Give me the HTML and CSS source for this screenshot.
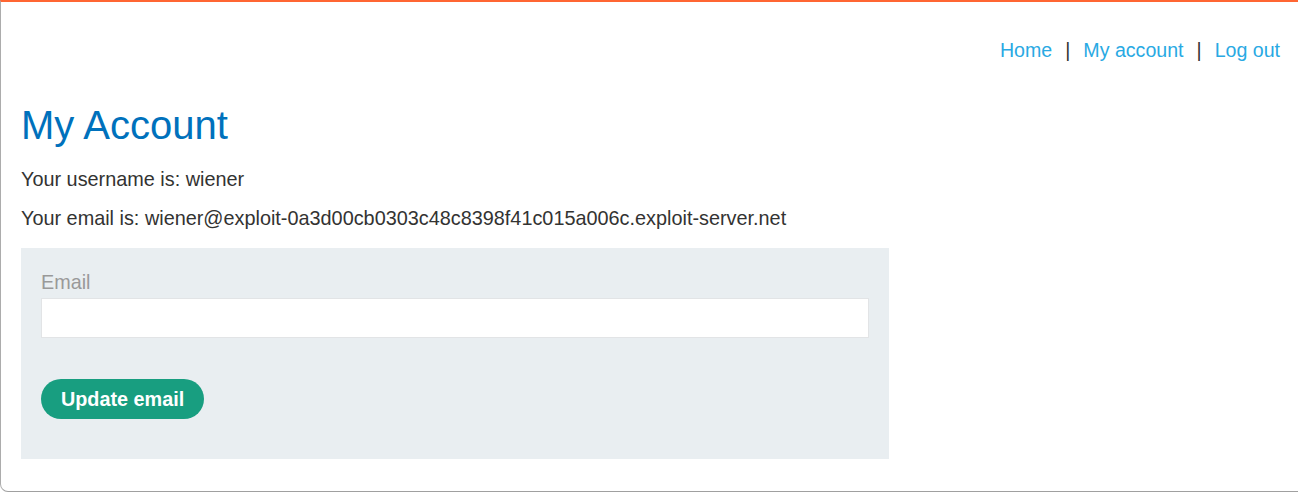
FILE: index.html
```html
<!DOCTYPE html>
<html>
<head>
<meta charset="utf-8">
<link rel="stylesheet" href="styles.css">
</head>
<body>
<div class="frame">
  <header class="nav">
    <a href="#">Home</a><span class="sep">|</span><a href="#">My account</a><span class="sep">|</span><a href="#">Log out</a>
  </header>
  <h1 class="title">My Account</h1>
  <p class="line user">Your username is: wiener</p>
  <p class="line email">Your email is: wiener@exploit-0a3d00cb0303c48c8398f41c015a006c.exploit-server.net</p>
  <form class="panel">
    <label class="label">Email</label>
    <input class="input" type="email">
    <button class="btn" type="button">Update email</button>
  </form>
</div>
</body>
</html>
```

FILE: styles.css
```css
html, body {
  margin: 0;
  padding: 0;
  background: #fff;
}
body {
  font-family: "Liberation Sans", Arial, sans-serif;
  color: #333332;
}
.frame {
  box-sizing: border-box;
  height: 492px;
  border-top: 2px solid #ff6633;
  border-left: 1px solid #acacac;
  border-bottom: 1px solid #a0a0a0;
  border-bottom-left-radius: 8px;
  padding: 0 18px 0 20px;
}
.nav {
  display: flex;
  justify-content: flex-end;
  align-items: baseline;
  padding-top: 37px;
  font-size: 19.6px;
  line-height: 22px;
}
.nav a {
  color: #29a9e3;
  text-decoration: none;
}
.sep {
  color: #333;
  margin: 0 13px;
}
.title {
  margin: 40px 0 0;
  font-weight: normal;
  font-size: 40px;
  line-height: 48px;
  color: #0071bc;
}
.line {
  margin: 0;
  font-size: 19.85px;
  line-height: 28px;
}
.user {
  margin-top: 16px;
}
.email {
  margin-top: 11px;
}
.panel {
  margin-top: 16px;
  width: 868px;
  box-sizing: border-box;
  background: #e9eef1;
  padding: 20px 20px 40px;
  display: flex;
  flex-direction: column;
  align-items: flex-start;
}
.label {
  color: #999;
  font-size: 19.8px;
  line-height: 28px;
}
.input {
  box-sizing: border-box;
  width: 100%;
  height: 40px;
  margin: 2px 0 0;
  border: 1px solid #e2e4e6;
  background: #fff;
}
.btn {
  margin-top: 41px;
  height: 40px;
  padding: 0 20px;
  border: none;
  border-radius: 20px;
  background: #189e80;
  color: #fff;
  font-family: "Liberation Sans", Arial, sans-serif;
  font-weight: bold;
  font-size: 19.8px;
}
```
